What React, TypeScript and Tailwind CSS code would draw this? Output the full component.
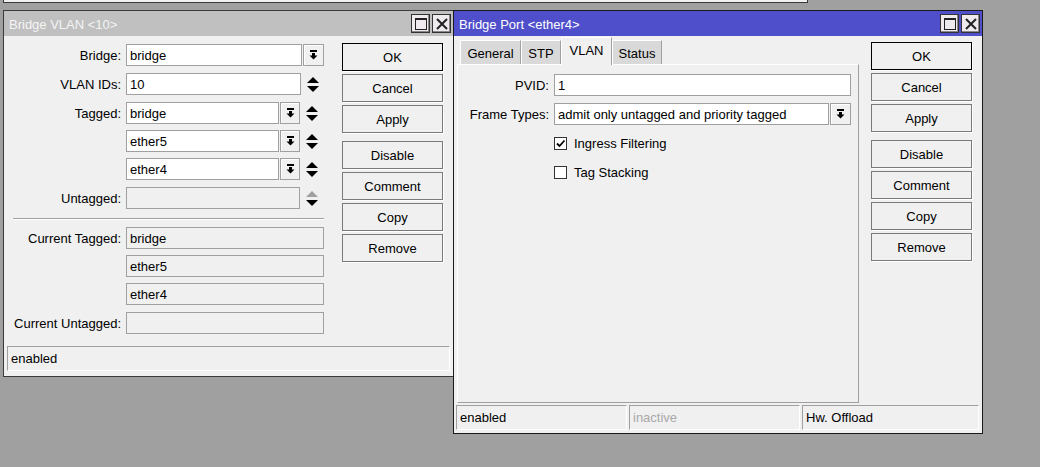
import React from "react";

function DropIcon() {
  return (
    <svg width="9" height="10" viewBox="0 0 9 10">
      <rect x="1" y="0" width="7" height="2" fill="#000" />
      <rect x="3" y="3" width="3" height="3" fill="#000" />
      <polygon points="0.5,5.5 8.5,5.5 4.5,9.5" fill="#000" />
    </svg>
  );
}

function SpinIcon({ disabled }: { disabled?: boolean }) {
  return (
    <svg width="12" height="15" viewBox="0 0 12 15">
      <polygon points="6,0 12,6 0,6" fill={disabled ? "#a0a0a0" : "#000"} />
      <polygon points="0,9 12,9 6,15" fill="#000" />
    </svg>
  );
}

function Drop({ w }: { w: string }) {
  return (
    <div className={`h-[22px] ${w} ml-[1px] flex items-center justify-center bg-[#f0f0f0] border border-[#a0a0a0] shadow-[inset_1px_1px_0_#ffffff]`}>
      <DropIcon />
    </div>
  );
}

function Input({ w, children, disabled }: { w: string; children?: React.ReactNode; disabled?: boolean }) {
  return (
    <div
      className={`h-[22px] ${w} flex items-center pl-[3px] pt-[2px] border border-[#a0a0a0] whitespace-nowrap overflow-hidden ${
        disabled ? "bg-[#f0f0f0]" : "bg-white"
      }`}
    >
      {children}
    </div>
  );
}

function Spin({ w, disabled }: { w: string; disabled?: boolean }) {
  return (
    <div className={`h-[22px] ${w} flex items-center justify-center`}>
      <SpinIcon disabled={disabled} />
    </div>
  );
}

function Row({ label, children, className, lw }: { label?: string; children: React.ReactNode; className: string; lw: string }) {
  return (
    <div className={`flex items-center h-[22px] ${className}`}>
      <div className={`${lw} h-[22px] flex items-center justify-end pt-[2px] pr-[5px] whitespace-nowrap`}>{label}</div>
      {children}
    </div>
  );
}

function Btn({ children, primary }: { children: React.ReactNode; primary?: boolean }) {
  return (
    <div
      className={`h-[28px] w-[101px] flex items-center justify-center pt-[2px] bg-[#f0f0f0] border shadow-[1px_1px_0_#ffffff] ${
        primary ? "border-black" : "border-[#7a7a7a]"
      }`}
    >
      {children}
    </div>
  );
}

function Buttons({ pt }: { pt: string }) {
  return (
    <div className={`flex flex-col gap-[3px] w-[101px] ${pt}`}>
      <Btn primary>OK</Btn>
      <Btn>Cancel</Btn>
      <Btn>Apply</Btn>
      <div className="h-[2px]" />
      <Btn>Disable</Btn>
      <Btn>Comment</Btn>
      <Btn>Copy</Btn>
      <Btn>Remove</Btn>
    </div>
  );
}

function MaxBtn() {
  return (
    <div className="w-[19px] h-[19px] bg-[#eeeaee] border border-[#333] shadow-[inset_-1px_-1px_0_#888] flex items-center justify-center">
      <div className="w-[12px] h-[12px] border border-[#222] border-t-2" />
    </div>
  );
}

function CloseBtn() {
  return (
    <div className="w-[19px] h-[19px] bg-[#eeeaee] border border-[#333] shadow-[inset_-1px_-1px_0_#888] flex items-center justify-center">
      <svg width="12" height="12" viewBox="0 0 12 12">
        <path d="M1 1 L11 11 M11 1 L1 11" stroke="#222" strokeWidth="2" />
      </svg>
    </div>
  );
}

function TitleBar({ title, bg, fg }: { title: string; bg: string; fg: string }) {
  return (
    <div className={`h-[25px] flex items-center pl-[5px] pr-[2px] ${bg}`}>
      <div className={`flex-1 h-[25px] flex items-center pt-[2px] whitespace-nowrap ${fg}`}>{title}</div>
      <div className="flex gap-[2px]">
        <MaxBtn />
        <CloseBtn />
      </div>
    </div>
  );
}

function StatusBox({ w, children, gray }: { w: string; children?: React.ReactNode; gray?: boolean }) {
  return (
    <div
      className={`${w} h-[25px] flex items-center pl-[3px] border-t border-l border-[#a0a0a0] border-r border-b border-r-white border-b-white whitespace-nowrap ${
        gray ? "text-[#a8a8a8]" : "text-black"
      }`}
    >
      {children}
    </div>
  );
}

function CheckBox({ checked }: { checked?: boolean }) {
  return (
    <div className="w-[13px] h-[13px] bg-white border border-[#333] flex items-center justify-center">
      {checked && (
        <svg width="11" height="11" viewBox="0 0 11 11">
          <path d="M2 5.5 L4.5 8 L9.5 2.5" stroke="#000" strokeWidth="1.8" fill="none" />
        </svg>
      )}
    </div>
  );
}

function Tab({ label, active, w }: { label: string; active?: boolean; w: string }) {
  return active ? (
    <div className={`${w} h-[28px] -mb-px relative z-10 bg-[#f0f0f0] border-t border-l border-white border-r border-r-[#a0a0a0] flex items-center justify-center pb-[2px]`}>
      {label}
    </div>
  ) : (
    <div className={`${w} h-[24px] bg-[#d9d9d9] border-t border-l border-white border-r border-r-[#a0a0a0] flex items-center justify-center pt-[2px]`}>
      {label}
    </div>
  );
}

export default function App() {
  const lw1 = "w-[122px]";
  return (
    <div className="relative w-[1040px] h-[467px] overflow-hidden bg-[#a0a0a0] text-[13px] text-black font-['Liberation_Sans',Arial,sans-serif]">
      {/* window above (only bottom edge visible) */}
      <div className="absolute left-[3px] top-[-20px] w-[805px] h-[23px] border border-[#3a3a3a] bg-[#f0f0f0]" />

      {/* Bridge VLAN window */}
      <div className="absolute left-[3px] top-[10px] w-[451px] h-[367px] border border-[#3a3a3a] bg-[#f0f0f0] flex flex-col">
        <TitleBar title="Bridge VLAN <10>" bg="bg-[#c0c0c0]" fg="text-[#f4f4f4]" />
        <div className="flex">
          <div className="w-[320px] pt-[8px] flex flex-col">
            <Row label="Bridge:" className="" lw={lw1}>
              <Input w="w-[176px]">bridge</Input>
              <Drop w="w-[21px]" />
            </Row>
            <Row label="VLAN IDs:" className="mt-[7px]" lw={lw1}>
              <Input w="w-[175px]">10</Input>
              <Spin w="w-[23px]" />
            </Row>
            <Row label="Tagged:" className="mt-[7px]" lw={lw1}>
              <Input w="w-[153px]">bridge</Input>
              <Drop w="w-[20px]" />
              <Spin w="w-[24px]" />
            </Row>
            <Row className="mt-[6px]" lw={lw1}>
              <Input w="w-[153px]">ether5</Input>
              <Drop w="w-[20px]" />
              <Spin w="w-[24px]" />
            </Row>
            <Row className="mt-[6px]" lw={lw1}>
              <Input w="w-[153px]">ether4</Input>
              <Drop w="w-[20px]" />
              <Spin w="w-[24px]" />
            </Row>
            <Row label="Untagged:" className="mt-[7px]" lw={lw1}>
              <Input w="w-[174px]" disabled />
              <Spin w="w-[24px]" disabled />
            </Row>
            <div className="ml-[9px] mt-[9px] w-[311px] h-[2px] border-t border-[#a0a0a0] border-b border-b-white" />
            <Row label="Current Tagged:" className="mt-[7px]" lw={lw1}>
              <Input w="w-[198px]" disabled>bridge</Input>
            </Row>
            <Row className="mt-[6px]" lw={lw1}>
              <Input w="w-[198px]" disabled>ether5</Input>
            </Row>
            <Row className="mt-[6px]" lw={lw1}>
              <Input w="w-[198px]" disabled>ether4</Input>
            </Row>
            <Row label="Current Untagged:" className="mt-[7px]" lw={lw1}>
              <Input w="w-[198px]" disabled />
            </Row>
          </div>
          <div className="ml-[18px]">
            <Buttons pt="pt-[7px]" />
          </div>
        </div>
        <div className="mt-auto ml-[3px] mr-[3px] mb-[5px] flex">
          <StatusBox w="flex-1">enabled</StatusBox>
        </div>
      </div>

      {/* Bridge Port window */}
      <div className="absolute left-[453px] top-[10px] w-[530px] h-[424px] border border-[#1a1a1a] bg-[#f0f0f0] flex flex-col">
        <TitleBar title="Bridge Port <ether4>" bg="bg-[#4f4fcb]" fg="text-white" />
        <div className="flex items-start">
          <div className="ml-[3px] pt-[1px] flex flex-col">
            <div className="flex items-end pl-[3px] h-[27px]">
              <Tab label="General" w="w-[61px]" />
              <Tab label="STP" w="w-[40px]" />
              <Tab label="VLAN" w="w-[51px]" active />
              <Tab label="Status" w="w-[50px]" />
            </div>
            <div className="w-[402px] h-[339px] border-t border-l border-white border-r border-b border-r-[#a0a0a0] border-b-[#a0a0a0] pt-[9px] flex flex-col">
              <Row label="PVID:" className="" lw="w-[96px]">
                <Input w="w-[297px]">1</Input>
              </Row>
              <Row label="Frame Types:" className="mt-[7px]" lw="w-[96px]">
                <Input w="w-[275px]">admit only untagged and priority tagged</Input>
                <Drop w="w-[21px]" />
              </Row>
              <div className="flex items-center h-[22px] mt-[7px] ml-[96px] gap-[7px]">
                <CheckBox checked />
                <span className="pt-[2px]">Ingress Filtering</span>
              </div>
              <div className="flex items-center h-[22px] mt-[7px] ml-[96px] gap-[7px]">
                <CheckBox />
                <span className="pt-[2px]">Tag Stacking</span>
              </div>
            </div>
          </div>
          <div className="ml-[12px]">
            <Buttons pt="pt-[6px]" />
          </div>
        </div>
        <div className="mt-auto mb-[3px] pl-[2px] flex gap-[2px]">
          <StatusBox w="w-[171px]">enabled</StatusBox>
          <StatusBox w="w-[171px]" gray>inactive</StatusBox>
          <StatusBox w="w-[177px]">Hw. Offload</StatusBox>
        </div>
      </div>
    </div>
  );
}
